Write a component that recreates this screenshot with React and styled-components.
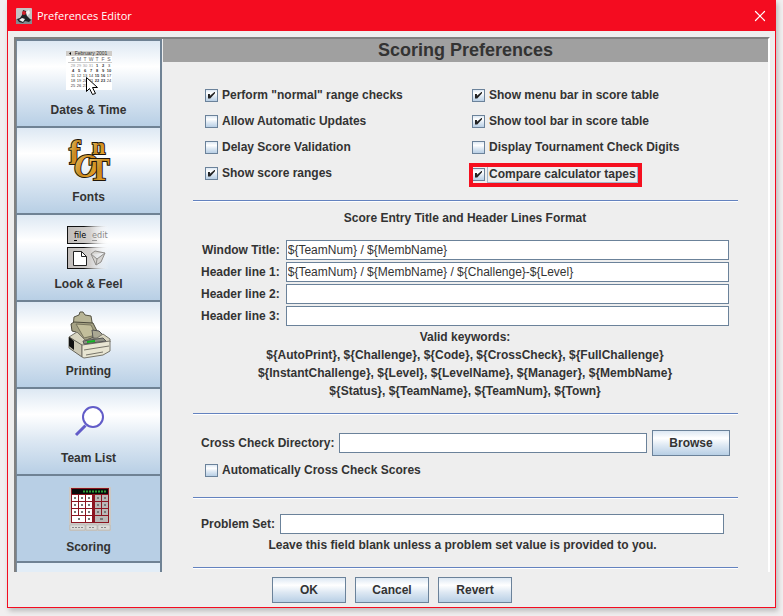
import React, { useState } from "react";
import styled, { createGlobalStyle } from "styled-components";
import { X } from "lucide-react";

const tabs = ["Dates & Time", "Fonts", "Look & Feel", "Printing", "Team List", "Scoring"];

const leftChecks = [
  { label: 'Perform "normal" range checks', on: true },
  { label: "Allow Automatic Updates", on: false },
  { label: "Delay Score Validation", on: false },
  { label: "Show score ranges", on: true },
];

const rightChecks = [
  { label: "Show menu bar in score table", on: true },
  { label: "Show tool bar in score table", on: true },
  { label: "Display Tournament Check Digits", on: false },
  { label: "Compare calculator tapes", on: true, marked: true },
];

const headerFields = [
  { id: "title", label: "Window Title:", value: "${TeamNum} / ${MembName}" },
  { id: "line1", label: "Header line 1:", value: "${TeamNum} / ${MembName} / ${Challenge}-${Level}" },
  { id: "line2", label: "Header line 2:", value: "" },
  { id: "line3", label: "Header line 3:", value: "" },
];

const keywords = [
  "${AutoPrint}, ${Challenge}, ${Code}, ${CrossCheck}, ${FullChallenge}",
  "${InstantChallenge}, ${Level}, ${LevelName}, ${Manager}, ${MembName}",
  "${Status}, ${TeamName}, ${TeamNum}, ${Town}",
];

const weeks = [
  ["28", "29", "30", "31", "1", "2", "3"],
  ["4", "5", "6", "7", "8", "9", "10"],
  ["11", "12", "13", "14", "15", "16", "17"],
  ["18", "19", "20", "21", "22", "23", "24"],
  ["25", "26", "27"],
];

const CalendarIcon = () => (
  <svg width="50" height="50" viewBox="0 0 50 50" fontFamily="Liberation Sans" fontWeight="400" textAnchor="middle">
    <path d="M2 2h46v39H2z" fill="#fff" />
    <path d="M2 2h46v5H2z" fill="#cfccc8" />
    <path d="M7 3v3l-2-1.500z" fill="#000" />
    <text x="27" y="6" fontSize="5" fill="#333">February 2001</text>
    {["S", "M", "T", "W", "T", "F", "S"].map((d, i) => (
      <text key={i} x={9 + i * 6} y="12" fontSize="5" fill="#666">{d}</text>
    ))}
    <path d="M4 13.500h44" stroke="#999" strokeWidth="0.500" />
    {weeks.map((week, r) =>
      week.map((d, c) => (
        <text
          key={r + "-" + c}
          x={9 + c * 6}
          y={18 + r * 5}
          fontSize="4"
          fontWeight={(c > 3 && c < 6) || r === 1 ? 700 : 400}
          fill={r === 0 && c < 4 ? "#999" : "#333"}
        >
          {d}
        </text>
      ))
    )}
    <path d="M22.500 28.500v14l3-3 3 6 3-1-3-6h5z" fill="#fff" stroke="#000" />
  </svg>
);

const FontIcon = () => (
  <svg
    width="50"
    height="50"
    viewBox="0 0 50 50"
    overflow="visible"
    fontFamily="Liberation Serif"
    fontWeight="700"
    stroke="#20160a"
    strokeWidth="2"
    paintOrder="stroke"
  >
    <defs>
      <linearGradient id="gold" x1="0" y1="0" x2="1" y2="1">
        <stop offset="0" stopColor="#f5cf70" />
        <stop offset="0.500" stopColor="#c98a20" />
        <stop offset="1" stopColor="#f0b030" />
      </linearGradient>
    </defs>
    <g fill="url(#gold)">
      <text x="5" y="28" fontSize="34">f</text>
      <text x="10" y="41" fontSize="34" fontStyle="italic">O</text>
      <text x="28" y="18" fontSize="24">n</text>
      <text x="25" y="44" fontSize="31">T</text>
    </g>
  </svg>
);

const LookIcon = () => (
  <svg width="50" height="50" viewBox="0 0 50 50">
    <defs>
      <linearGradient id="barFade">
        <stop offset="0" stopColor="#c0bcb9" />
        <stop offset="0.550" stopColor="#d3d0ce" />
        <stop offset="1" stopColor="#fff" stopOpacity="0" />
      </linearGradient>
      <linearGradient id="edgeFade" gradientUnits="userSpaceOnUse" x1="3" y1="0" x2="45" y2="0">
        <stop offset="0.400" stopColor="#111" />
        <stop offset="1" stopColor="#fff" stopOpacity="0" />
      </linearGradient>
    </defs>
    <path d="M3 3h42v18H3zM3 24h42v22H3z" fill="url(#barFade)" />
    <path d="M45 3H3v18H45V20H4V4H45zM45 24H3v22H45V45H4V25H45z" fill="url(#edgeFade)" />
    <g fontFamily="DejaVu Sans Condensed, DejaVu Sans" fontSize="9" fontWeight="400">
      <text x="10" y="15" fill="#000">file</text>
      <text x="28" y="15" fill="#8a8886">edit</text>
    </g>
    <path d="M10 17.500h3" stroke="#000" />
    <path d="M28 17.500h5" stroke="#999" />
    <path d="M9.500 28.500h8l5 5v9h-13z" fill="#fff" stroke="#222" />
    <path d="M17.500 28.500v5h5" fill="none" stroke="#222" />
    <path d="M27 31l4-3 10 2-4 9-5 3zM27 31l6 5 8-6M33 36l-1 6" fill="#d5d3d0" stroke="#8f8d8a" />
  </svg>
);

const PrinterIcon = () => (
  <svg width="50" height="50" viewBox="0 0 50 50" strokeLinejoin="round">
    <path d="M10 7l5-2 1-3h3l2 3 6 1 2 12H9z" fill="#b8b596" stroke="#555343" />
    <path d="M7 14l3-2 19 1 6 12-15 6-8-9-4-1z" fill="#a5a284" stroke="#4c4a3c" />
    <path d="M12 14l15 1 5 10-12 3z" fill="#c2be9b" stroke="#77745d" />
    <path d="M28 20l7 1 4 4-2 4-8-1z" fill="#aaa893" stroke="#555" />
    <path d="M5 27l8-5 8 8 12-2 6-4 7 5v3l-28 4z" fill="#d8d5c0" stroke="#77756a" />
    <path d="M5 27l13 8v12L5 38z" fill="#ccc8b5" stroke="#66645a" />
    <path d="M5 27l5 4v9l-5-4z" fill="#111" />
    <path d="M18 35l28-4v10l-7 4-19 3-2-1z" fill="#e8e5d2" stroke="#77756a" />
    <path d="M19 31l20-3 3 3-22 3z" fill="#8c8e82" stroke="#555" />
    <path d="M23 31l8-1v2l-8 1z" fill="#12b523" />
    <path d="M20 40l25-4M22 45l17-3" stroke="#77756a" fill="none" />
  </svg>
);

const SearchIcon = () => (
  <svg width="50" height="50" viewBox="0 0 50 50">
    <circle cx="29" cy="20" r="10" fill="#fff" stroke="#625cc8" strokeWidth="2" />
    <path d="M21.500 28.500L12 38" stroke="#625cc8" strokeWidth="3" />
  </svg>
);

const CalculatorIcon = () => (
  <svg width="50" height="54" viewBox="0 0 50 54">
    <path d="M5 5h42v44H5z" fill="#cbc9c5" />
    <path d="M7 6h38v35H7z" fill="#8b1520" />
    <path d="M8 7h36v5H8z" fill="#090909" />
    <path d="M19 9.500h24" stroke="#2d9f37" strokeWidth="2" strokeDasharray="2 1" />
    {[0, 1, 2, 3].map((r) =>
      [0, 1, 2, 3, 4].map((c) => (
        <g key={r + "-" + c}>
          <rect x={8 + c * 7 + (c > 2 ? 2 : 0)} y={13 + r * 7} width="6" height="6" fill={c > 2 ? "#bab8b7" : "#fff"} />
          <rect x={10 + c * 7 + (c > 2 ? 2 : 0)} y={15 + r * 7} width="2" height="2" fill="#777" />
        </g>
      ))
    )}
    <path d="M8 34h13v6H8z" fill="#fff" />
    <path d="M31 34h13v6H31z" fill="#bab8b7" />
    <path d="M14 36h2v2h-2zM36 36h3v2h-3z" fill="#777" />
    <path d="M6 43h15v5H6zM22 43h11v5H22zM34 43h12v5H34z" fill="#dddcd9" stroke="#aaa8a5" strokeWidth="0.500" />
    <path d="M8 45.500h11M25 45.500h5M37 45.500h6" stroke="#888" strokeDasharray="2 1" />
  </svg>
);

const icons = [CalendarIcon, FontIcon, LookIcon, PrinterIcon, SearchIcon, CalculatorIcon];

const AppLogo = () => (
  <svg width="16" height="16" viewBox="0 0 16 16">
    <rect width="16" height="16" rx="1" fill="#c4c4c4" />
    <path d="M0 11h16v5H0z" fill="#858b91" />
    <path d="M1 11l3-1 2-3 1-5 3 1 1 5 4 4-2 2-4-1-2 2-4-1z" fill="#202326" />
    <path d="M3 12l3-2 3 1-2 3zM10 4l3-2 1 3-3 3z" fill="#f2f2f2" />
    <circle cx="8" cy="5" r="2" fill="#d4202b" />
  </svg>
);

const Check = ({ item }) => (
  <CheckLabel $marked={item.marked}>
    <Box type="checkbox" defaultChecked={item.on} />
    <CheckText $focused={item.marked}>{item.label}</CheckText>
  </CheckLabel>
);

const App = () => {
  const [active, setActive] = useState("Scoring");

  return (
    <>
      <GlobalStyle />
      <Window>
        <TitleBar>
          <AppLogo />
          <WindowTitle>Preferences Editor</WindowTitle>
          <CloseButton aria-label="Close">
            <X size={18} strokeWidth={1.6} />
          </CloseButton>
        </TitleBar>
        <Content>
          <Frame>
            <Sidebar>
              {tabs.map((tab, i) => {
                const Icon = icons[i];
                return (
                  <Tab key={tab} $active={tab === active} onClick={() => setActive(tab)}>
                    <Icon />
                    {tab}
                  </Tab>
                );
              })}
              <SidebarRest />
            </Sidebar>
            <Panel>
              <PanelTitle>Scoring Preferences</PanelTitle>
              <Checks>
                <CheckColumn>
                  {leftChecks.map((item) => (
                    <Check key={item.label} item={item} />
                  ))}
                </CheckColumn>
                <CheckColumn>
                  {rightChecks.map((item) => (
                    <Check key={item.label} item={item} />
                  ))}
                </CheckColumn>
              </Checks>
              <HeaderSection>
                <SectionTitle>Score Entry Title and Header Lines Format</SectionTitle>
                <Fields>
                  {headerFields.map((field) => (
                    <React.Fragment key={field.id}>
                      <FieldLabel htmlFor={field.id}>{field.label}</FieldLabel>
                      <TextInput id={field.id} defaultValue={field.value} />
                    </React.Fragment>
                  ))}
                </Fields>
                <Keywords>
                  <p>Valid keywords:</p>
                  {keywords.map((line) => (
                    <p key={line}>{line}</p>
                  ))}
                </Keywords>
              </HeaderSection>
              <CrossSection>
                <DirectoryRow>
                  <FieldLabel htmlFor="directory">Cross Check Directory:</FieldLabel>
                  <TextInput id="directory" />
                  <Button>Browse</Button>
                </DirectoryRow>
                <Check item={{ label: "Automatically Cross Check Scores", on: false }} />
              </CrossSection>
              <ProblemSection>
                <ProblemRow>
                  <FieldLabel htmlFor="problem">Problem Set:</FieldLabel>
                  <TextInput id="problem" />
                </ProblemRow>
                <Hint>Leave this field blank unless a problem set value is provided to you.</Hint>
              </ProblemSection>
              <PanelEnd />
            </Panel>
          </Frame>
          <Actions>
            <Button>OK</Button>
            <Button>Cancel</Button>
            <Button>Revert</Button>
          </Actions>
        </Content>
      </Window>
    </>
  );
};

export default App;

const GlobalStyle = createGlobalStyle`
  * {
    box-sizing: border-box;
  }
  body {
    margin: 0;
    background-color: #f1eff0;
    color: #333;
    font: bold 12px/18px "Liberation Sans", Arial, sans-serif;
  }
  p, h1, h2 {
    margin: 0;
  }
`;

const Window = styled.main`
  margin: 0 7px 8px;
  background-color: #eee;
  box-shadow: 2px 3px 5px #bbb;
`;

const TitleBar = styled.header`
  display: flex;
  align-items: center;
  gap: 5px;
  height: 31px;
  padding: 0 7px 0 9px;
  background-color: #f40c20;
  color: white;
`;

const WindowTitle = styled.h1`
  flex: 1;
  font: 11px/18px "Open Sans", "Noto Sans", sans-serif;
`;

const CloseButton = styled.button`
  display: flex;
  padding: 0;
  border: 0;
  background: none;
  color: white;
`;

const Content = styled.div`
  padding: 6px 5px 4px 6px;
  border: 1px solid #f40c20;
  border-top: 0;
`;

const Frame = styled.div`
  display: grid;
  grid-template-columns: 147px 1fr;
  border: 2px solid #808080;
  border-right-color: white;
  border-bottom: 0;
`;

const Sidebar = styled.nav`
  display: flex;
  flex-direction: column;
  margin-right: 1px;
  border-top: 2px solid #6f8294;
  border-right: 2px solid #6f8294;
`;

const Tab = styled.button`
  display: flex;
  flex-direction: column;
  align-items: center;
  justify-content: center;
  gap: 4px;
  height: 87px;
  padding: 0;
  border: 0;
  border-left: 1px solid #7a8a99;
  border-bottom: 2px solid #6f8294;
  background: ${(props) =>
    props.$active ? "#b8cfe5" : "linear-gradient(#dde8f3, #fff 30%, #dde8f3 60%, #b8cfe5)"};
  color: #333;
  font: inherit;
  line-height: 15px;
`;

const SidebarRest = styled.div`
  flex: 1;
  border-left: 1px solid #7a8a99;
  background-color: #e2edf7;
`;

const Panel = styled.section`
  display: flex;
  flex-direction: column;
`;

const PanelTitle = styled.h2`
  background-color: #a0a0a0;
  font-size: 18px;
  line-height: 23px;
  text-align: center;
`;

const Checks = styled.div`
  display: grid;
  grid-template-columns: 267px 1fr;
  padding: 20px 42px 13px;
`;

const CheckColumn = styled.div`
  display: flex;
  flex-direction: column;
  align-items: flex-start;
`;

const CheckLabel = styled.label`
  display: flex;
  align-items: center;
  gap: 3px;
  height: 26px;
  ${(props) =>
    props.$marked &&
    `
    height: 24px;
    margin: 3px -3px 0;
    outline: 4px solid #f50f1f;
    outline-offset: -4px;
    padding: 0 5px 2px 3px;
  `}
`;

const CheckText = styled.span`
  padding: 0 1px;
  line-height: 15px;
  ${(props) => props.$focused && "box-shadow: 0 0 0 1px #a3b8cc;"}
`;

const Box = styled.input`
  appearance: none;
  flex: none;
  width: 13px;
  height: 13px;
  margin: 0;
  border: 1px solid #6b829a;
  background: linear-gradient(#dde8f3, #fff 30%, #dde8f3 60%, #b8cfe5);
  &:checked::after {
    content: "";
    display: block;
    width: 7px;
    height: 7px;
    margin: 2px;
    background-color: #222;
    clip-path: polygon(0 35%, 28% 35%, 28% 62%, 100% 0, 100% 25%, 32% 100%, 0 100%);
  }
`;

const Section = styled.div`
  margin: 0 30px;
  border-top: 1px solid #6382bf;
  box-shadow: inset 0 1px white;
`;

const HeaderSection = styled(Section)`
  padding: 8px 9px 13px 8px;
`;

const SectionTitle = styled.h2`
  font-size: 12px;
  line-height: 18px;
  text-align: center;
`;

const Fields = styled.div`
  display: grid;
  grid-template-columns: auto 1fr;
  column-gap: 6px;
  row-gap: 2px;
  margin: 13px 0 2px;
`;

const FieldLabel = styled.label`
  line-height: 20px;
  text-align: right;
  white-space: nowrap;
`;

const TextInput = styled.input`
  width: 100%;
  min-width: 0;
  height: 20px;
  padding: 0 1px;
  border: 1px solid #6b829a;
  background-color: white;
  color: #333;
  font: 12px "Liberation Sans", Arial, sans-serif;
`;

const Keywords = styled.div`
  text-align: center;
`;

const CrossSection = styled(Section)`
  padding: 16px 8px 14px;
`;

const DirectoryRow = styled.div`
  display: flex;
  align-items: center;
  gap: 5px;
  & + label {
    margin: 1px 0 0 4px;
  }
`;

const ProblemSection = styled(Section)`
  padding: 16px 14px 13px 8px;
`;

const ProblemRow = styled.div`
  display: flex;
  align-items: center;
  gap: 5px;
`;

const Hint = styled.p`
  margin-top: 2px;
  text-align: center;
`;

const PanelEnd = styled(Section)`
  height: 5px;
`;

const Button = styled.button`
  flex: none;
  width: 74px;
  height: 26px;
  padding: 0;
  border: 1px solid #6b829a;
  background: linear-gradient(#dde8f3, #fff 30%, #dde8f3 60%, #b8cfe5);
  color: #333;
  font: inherit;
  ${DirectoryRow} & {
    width: 78px;
  }
`;

const Actions = styled.footer`
  display: flex;
  justify-content: center;
  gap: 9px;
  padding-top: 5px;
`;
